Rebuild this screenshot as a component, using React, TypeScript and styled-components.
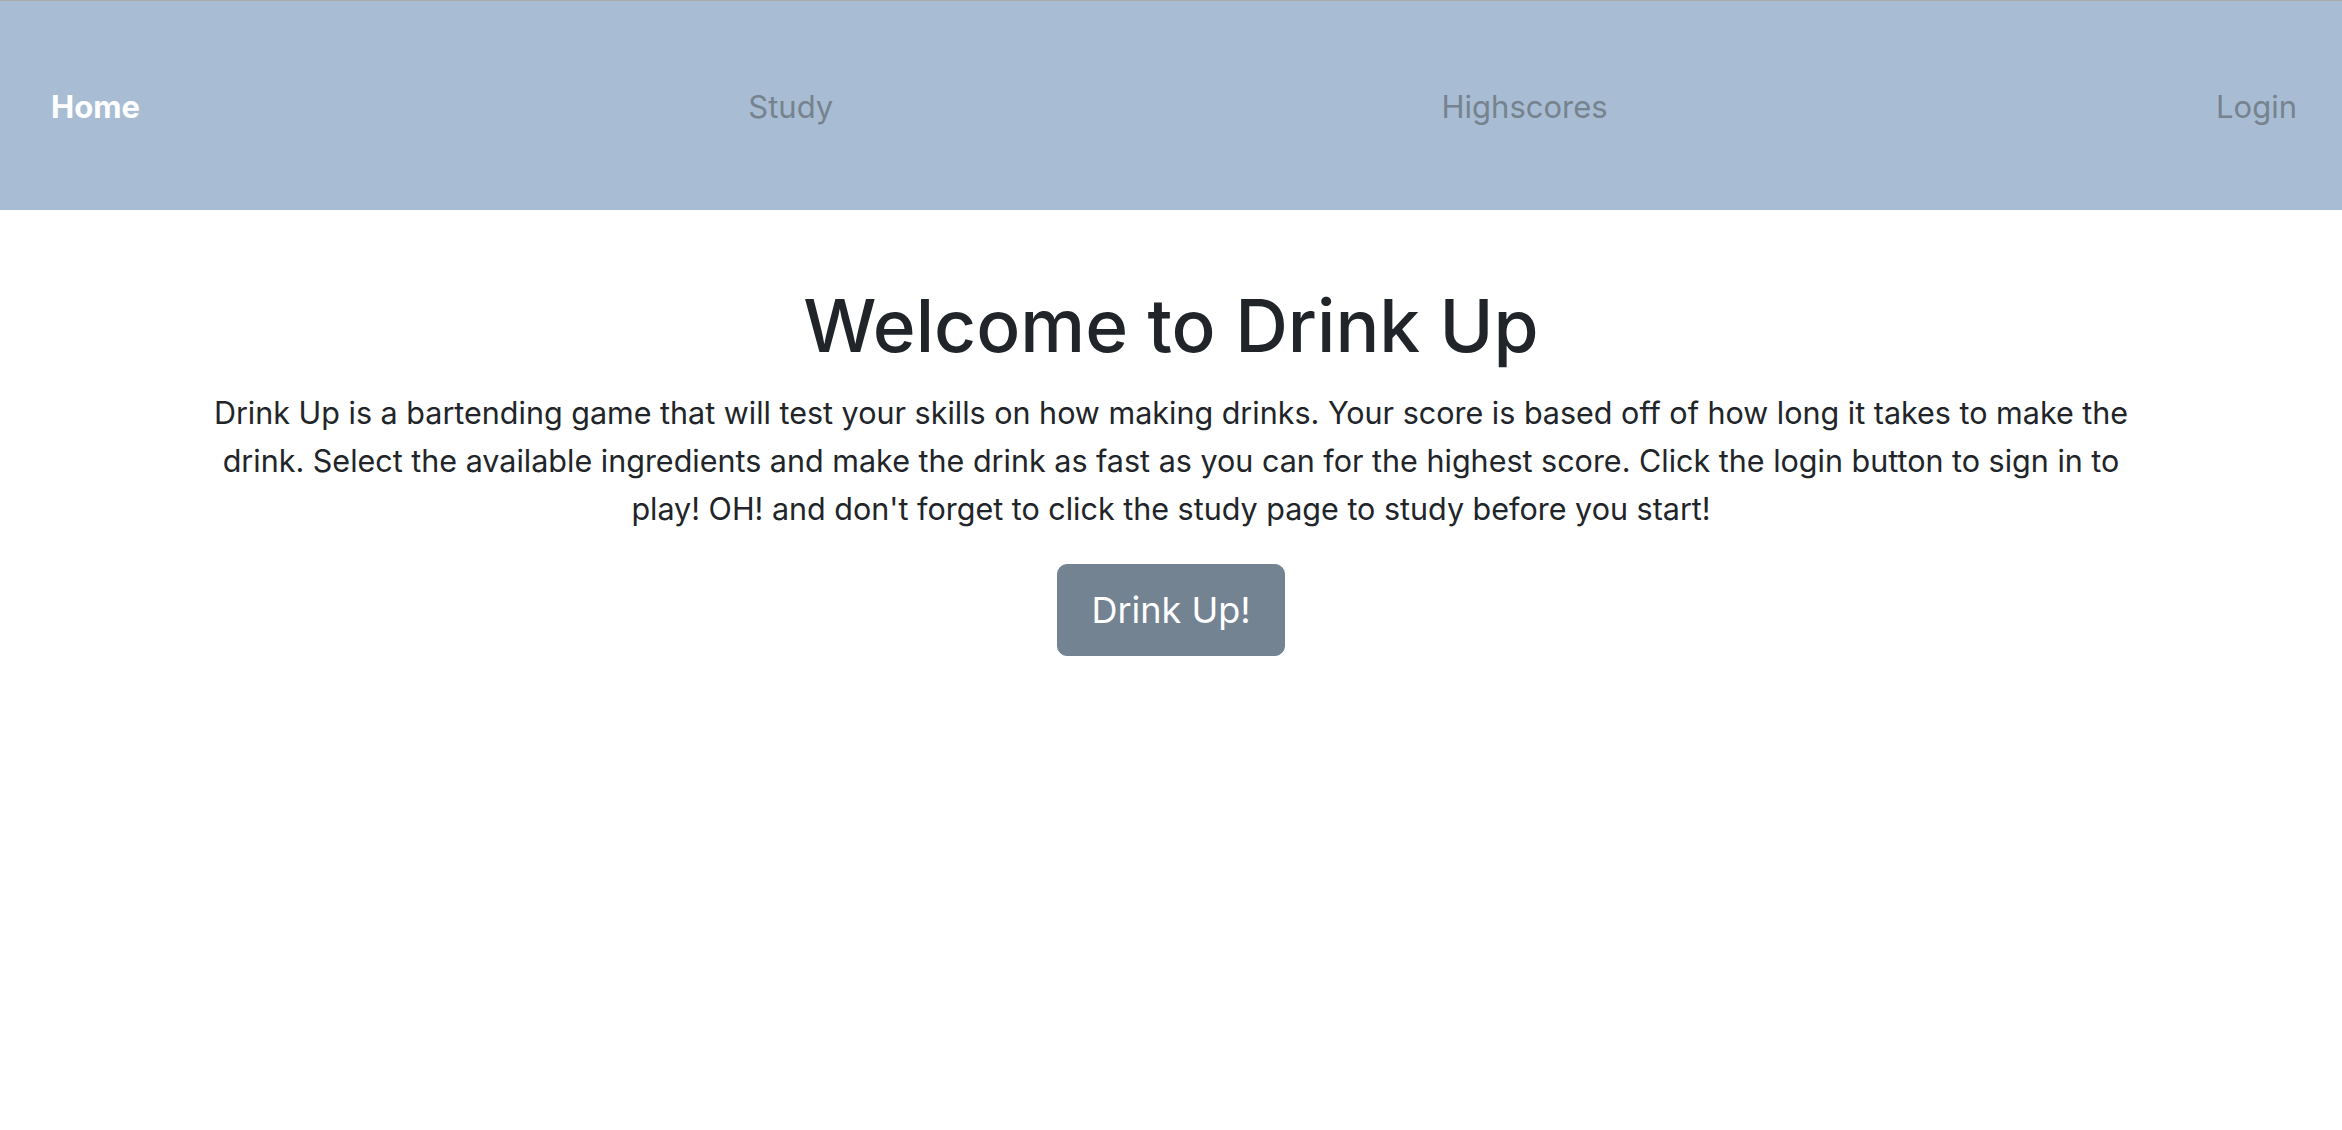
import * as React from 'react';
import styled, { createGlobalStyle } from 'styled-components';

const GlobalStyle = createGlobalStyle`
  html, body {
    margin: 0;
    padding: 0;
    background: #ffffff;
  }
  body {
    font-family: Inter, "Noto Sans", "Liberation Sans", sans-serif;
    color: #212529;
  }
`;

const links = [
  { label: 'Home', active: true },
  { label: 'Study', active: false },
  { label: 'Highscores', active: false },
  { label: 'Login', active: false }
];

export default function App() {
  return (
    <>
      <GlobalStyle />
      <NavBar>
        {links.map(link => (
          <NavLink key={link.label} active={link.active}>
            {link.label}
          </NavLink>
        ))}
      </NavBar>
      <Main>
        <Title>Welcome to Drink Up</Title>
        <Intro>
          Drink Up is a bartending game that will test your skills on how making
          drinks. Your score is based off of how long it takes to make the drink.
          Select the available ingredients and make the drink as fast as you can
          for the highest score. Click the login button to sign in to play! OH!
          and don't forget to click the study page to study before you start!
        </Intro>
        <PlayButton>Drink Up!</PlayButton>
      </Main>
    </>
  );
}

const NavBar = styled.nav`
  display: flex;
  align-items: center;
  justify-content: space-between;
  box-sizing: border-box;
  height: 210px;
  padding: 2px 45px 0 51px;
  background-color: #a8bdd3;
  border-top: 1px solid #a9a9a9;
`;

const NavLink = styled.a<{ active: boolean }>`
  font-size: 31px;
  line-height: 48px;
  font-weight: ${p => (p.active ? 700 : 400)};
  color: ${p => (p.active ? '#ffffff' : '#76838f')};
  text-decoration: none;
  cursor: pointer;
`;

const Main = styled.main`
  display: flex;
  flex-direction: column;
  align-items: center;
  padding: 68px 200px 0;
  text-align: center;
`;

const Title = styled.h1`
  margin: 0 0 15px;
  font-size: 73px;
  line-height: 96px;
  font-weight: 500;
  color: #212529;
`;

const Intro = styled.p`
  margin: 0 0 31px;
  font-size: 30.5px;
  line-height: 48px;
  color: #212529;
`;

const PlayButton = styled.button`
  padding: 15px 33px;
  border: 1px solid #748391;
  border-radius: 10px;
  background-color: #748391;
  color: #ffffff;
  font-family: inherit;
  font-size: 36px;
  line-height: 60px;
  cursor: pointer;
`;
